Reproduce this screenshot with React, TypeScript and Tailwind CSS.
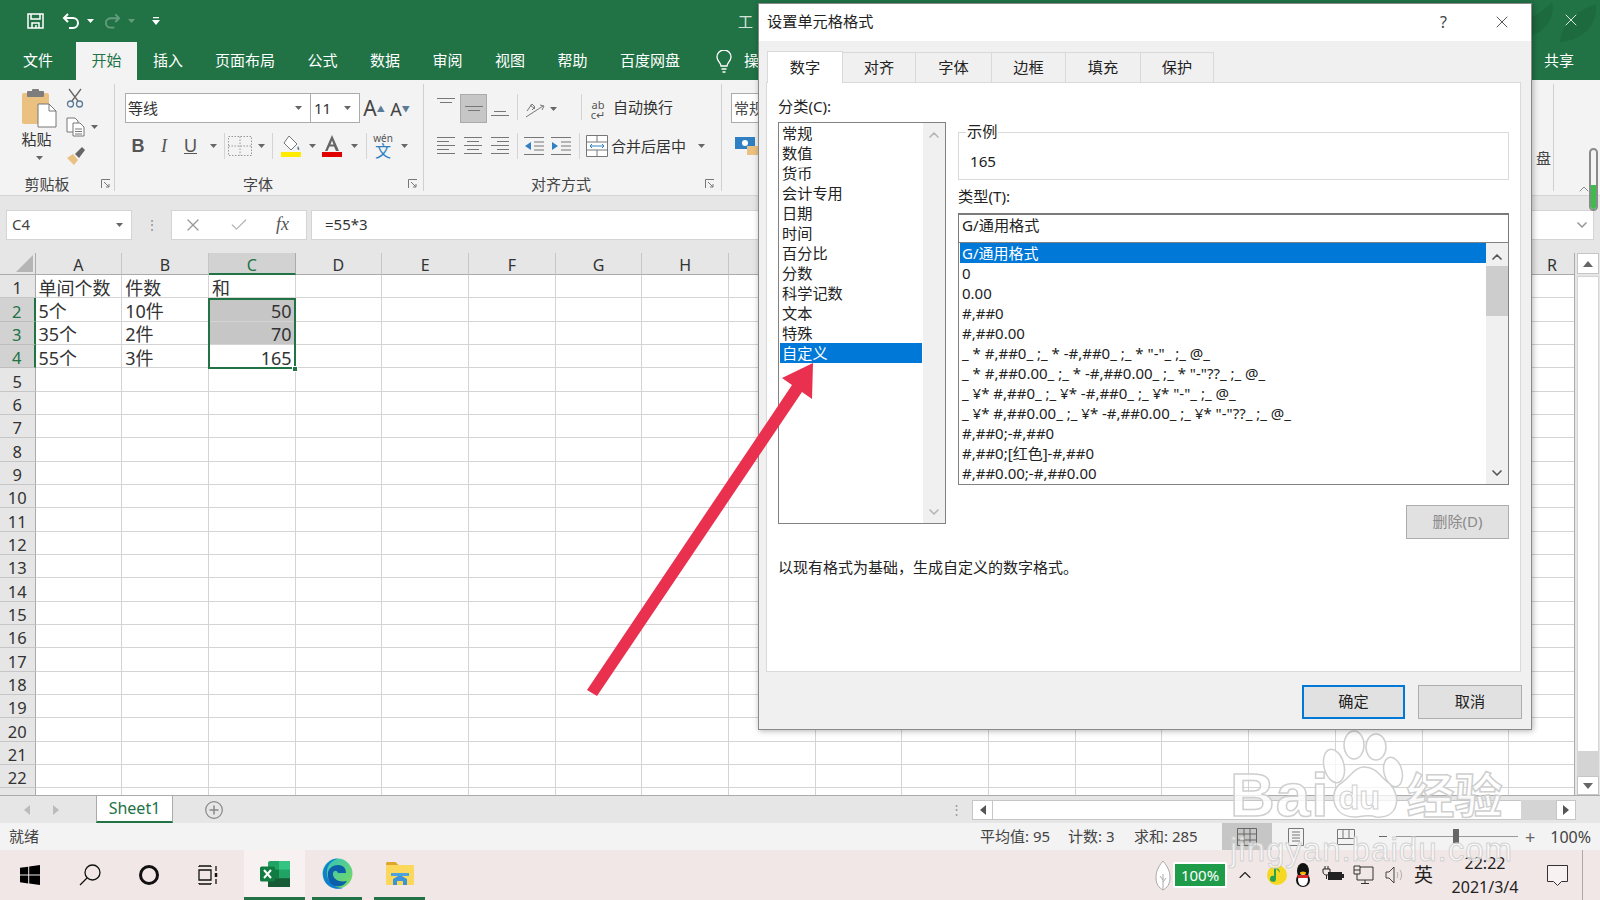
import React from 'react';
import { ChevronUp, ChevronDown, X, Check } from 'lucide-react';

const columns = ['A', 'B', 'C', 'D', 'E', 'F', 'G', 'H', 'I', 'J', 'K', 'L', 'M', 'N', 'O', 'P', 'Q', 'R'];
const rows = Array.from({ length: 23 }, (_, i) => i + 1);
const cells: Record<string, string> = {
  A1: '单间个数', B1: '件数', C1: '和',
  A2: '5个', B2: '10件', C2: '50',
  A3: '35个', B3: '2件', C3: '70',
  A4: '55个', B4: '3件', C4: '165',
};

const tabs = [
  { label: '文件', w: 'w-[76px]' },
  { label: '开始', w: 'w-[61px]', active: true },
  { label: '插入', w: 'w-[62px]' },
  { label: '页面布局', w: 'w-[92px]' },
  { label: '公式', w: 'w-[63px]' },
  { label: '数据', w: 'w-[62px]' },
  { label: '审阅', w: 'w-[63px]' },
  { label: '视图', w: 'w-[62px]' },
  { label: '帮助', w: 'w-[63px]' },
  { label: '百度网盘', w: 'w-[92px]' },
];

const categories = ['常规', '数值', '货币', '会计专用', '日期', '时间', '百分比', '分数', '科学记数', '文本', '特殊', '自定义'];
const formats = [
  'G/通用格式',
  '0',
  '0.00',
  '#,##0',
  '#,##0.00',
  '_ * #,##0_ ;_ * -#,##0_ ;_ * "-"_ ;_ @_',
  '_ * #,##0.00_ ;_ * -#,##0.00_ ;_ * "-"??_ ;_ @_',
  '_ ¥* #,##0_ ;_ ¥* -#,##0_ ;_ ¥* "-"_ ;_ @_',
  '_ ¥* #,##0.00_ ;_ ¥* -#,##0.00_ ;_ ¥* "-"??_ ;_ @_',
  '#,##0;-#,##0',
  '#,##0;[红色]-#,##0',
  '#,##0.00;-#,##0.00',
];
const dialogTabs = [
  { label: '对齐', w: 'w-[73px]' },
  { label: '字体', w: 'w-[76px]' },
  { label: '边框', w: 'w-[74px]' },
  { label: '填充', w: 'w-[75px]' },
  { label: '保护', w: 'w-[73px]' },
];

function Caret({ className = '', color = '#666' }: { className?: string; color?: string }) {
  return (
    <span className={'flex items-center justify-center ' + className}>
      <svg width="7" height="4" viewBox="0 0 7 4"><path d="M0 0h7L3.500 4z" fill={color} /></svg>
    </span>
  );
}

function Lines({ widths, align = 'left' }: { widths: number[]; align?: string }) {
  return (
    <svg width="18" height={widths.length * 4} viewBox={'0 0 18 ' + widths.length * 4}>
      {widths.map((w, i) => {
        const x = align === 'left' ? 0 : align === 'right' ? 18 - w : (18 - w) / 2;
        return <rect key={i} x={x} y={i * 4 + 1} width={w} height="1" fill="#777" />;
      })}
    </svg>
  );
}

function Launcher() {
  return (
    <svg width="10" height="10" viewBox="0 0 10 10" fill="none" stroke="#777">
      <path d="M.5 9V.5H9M3 3l5 5M8 5v3H5" />
    </svg>
  );
}

function VSep({ className = '' }: { className?: string }) {
  return <span className={'w-px h-[26px] bg-[#d4d4d4] ' + className} />;
}

function Group({ width, label, labelW, children }: { width: string; label?: string; labelW?: string; children: React.ReactNode }) {
  return (
    <div className={'flex flex-col h-[107px] mt-[4px] border-r border-[#d0d0d0] shrink-0 ' + width}>
      <div className="h-[89px] shrink-0">{children}</div>
      {label && (
        <div className="flex items-center h-[22px] shrink-0 text-[15px] text-[#444]">
          <span className={'text-center leading-[22px] ' + labelW}>{label}</span>
          <span className="ml-[7px] flex"><Launcher /></span>
        </div>
      )}
    </div>
  );
}

function PasteIcon() {
  return (
    <svg width="36" height="39" viewBox="0 0 36 39">
      <rect x="1" y="4" width="27" height="31" rx="2" fill="#eac180" />
      <rect x="6" y="2" width="17" height="6" rx="1" fill="#7d7d7d" />
      <rect x="11" y="0" width="7" height="4" rx="1" fill="#7d7d7d" />
      <path d="M17 15h11l7 7v16H17z" fill="#fff" stroke="#777" />
      <path d="M28 15v7h7" fill="none" stroke="#777" />
    </svg>
  );
}

function ExcelIcon() {
  return (
    <svg width="30" height="28" viewBox="0 0 30 28">
      <rect x="8" y="1" width="22" height="26" rx="2" fill="#21a366" />
      <rect x="19" y="1" width="11" height="8.6" fill="#33c481" />
      <rect x="8" y="9.6" width="11" height="8.6" fill="#107c41" />
      <rect x="8" y="18.2" width="22" height="8.8" fill="#185c37" />
      <rect x="0" y="6.5" width="15" height="15" rx="1.5" fill="#107c41" />
      <path d="M4 10l7 8M11 10l-7 8" stroke="#fff" strokeWidth="2" />
    </svg>
  );
}

function EdgeIcon() {
  return (
    <svg width="31" height="31" viewBox="0 0 31 31">
      <defs>
        <linearGradient id="edgeA" x1="0" y1="0" x2="1" y2="1">
          <stop offset="0" stopColor="#2fc2c0" />
          <stop offset="1" stopColor="#7ddb5c" />
        </linearGradient>
      </defs>
      <circle cx="15.5" cy="15.5" r="15" fill="url(#edgeA)" />
      <path d="M1 14C3 5 10 .5 16 .5 8 3 4 9 5 17c1 8 9 14 17 12.5C16 33 0 30 1 14z" fill="#0f7fd0" />
      <path d="M6 18c-1-7 4-11 10-11 6 0 8 4 8 8h-8c-1-3-4-3-5 0-1 5 5 10 14 8-3 5-8 6-12 5-4-1-7-5-7-10z" fill="#0c5fa8" />
    </svg>
  );
}

function FolderIcon() {
  return (
    <svg width="28" height="23" viewBox="0 0 28 23">
      <path d="M0 1.500C0 .7.700 0 1.500 0h8l3 3H0z" fill="#e0a52b" />
      <rect y="3" width="28" height="20" rx="1" fill="#fbd75b" />
      <path d="M7 23v-6l7-4 7 4v6h-4v-4h-6v4z" fill="#3b94d9" />
      <rect x="5" y="11" width="18" height="3" fill="#4aa3df" />
    </svg>
  );
}

function Watermark() {
  return (
    <div className="absolute left-[1230px] top-[730px] w-[290px] h-[135px] pointer-events-none">
      <div className="flex items-end h-[96px]">
        <span className="text-[62px] leading-[62px] font-bold tracking-[1px] font-['Liberation_Sans',sans-serif] text-white/80 [-webkit-text-stroke:1.5px_#cfcfcf]">Bai</span>
        <span className="relative w-[84px] h-[88px] -ml-[7px] mb-[8px]">
          <svg className="absolute inset-0" width="84" height="88" viewBox="0 0 84 88" fill="#ffffffc0" stroke="#cfcfcf" strokeWidth="1.5">
            <ellipse cx="12" cy="36" rx="10" ry="17" transform="rotate(-14 12 36)" />
            <ellipse cx="32" cy="15" rx="10" ry="14" />
            <ellipse cx="54" cy="17" rx="10" ry="13" />
            <ellipse cx="71" cy="42" rx="9" ry="15" transform="rotate(-14 71 42)" />
            <path d="M42 37c-10 0-14 11-24 17C8 60 8 86 32 87c6 0 14-3 22 0 22 2 26-20 14-33-10-7-13-17-26-17z" />
          </svg>
          <span className="absolute left-[16px] top-[50px] text-[34px] leading-[34px] font-bold font-['Liberation_Sans',sans-serif] text-white/70 [-webkit-text-stroke:1px_#cfcfcf]">du</span>
        </span>
        <span className="text-[48px] leading-[56px] mb-[6px] font-bold font-['Noto_Sans_CJK_SC',sans-serif] text-white/80 [-webkit-text-stroke:1.5px_#cfcfcf] whitespace-nowrap">经验</span>
      </div>
      <div className="mt-[6px] text-[33px] leading-[36px] tracking-[1px] font-['Liberation_Sans',sans-serif] text-white/70 [-webkit-text-stroke:1px_#d2d2d2] whitespace-nowrap">jingyan.baidu.com</div>
    </div>
  );
}

function ListChevrons({ up, down }: { up: string; down: string }) {
  return (
    <>
      <ChevronUp className={'absolute ' + up} size={16} strokeWidth={2.5} />
      <ChevronDown className={'absolute ' + down} size={16} strokeWidth={2.5} />
    </>
  );
}

function FormatDialog() {
  return (
    <div className="absolute left-[758px] top-[3px] w-[774px] h-[727px] flex flex-col bg-[#f0f0f0] border border-[#8a8a8a] shadow-[1px_1px_6px_rgba(0,0,0,0.3)] text-[#222]">
      <div className="flex items-center h-[37px] pb-[2px] bg-white shrink-0">
        <span className="ml-[8px] text-[15.2px]">设置单元格格式</span>
        <span className="ml-auto mr-[45px] text-[16px] text-[#444]">?</span>
        <X className="mr-[19px]" size={20} strokeWidth={1} color="#333" />
      </div>

      <div className="flex items-end h-[41px] pl-[8px] shrink-0">
        <div className="flex items-center justify-center w-[76px] h-[32px] bg-white border-x border-t border-[#d9d9d9] text-[15.2px] -mb-px z-10">数字</div>
        {dialogTabs.map((t) => (
          <div key={t.label} className={'flex items-center justify-center h-[30px] bg-[#f0f0f0] border-r border-t border-[#d9d9d9] text-[15.2px] ' + t.w}>{t.label}</div>
        ))}
      </div>

      <div className="mx-[7px] w-[755px] h-[590px] bg-white border border-[#d9d9d9] pl-[11px] shrink-0">
        <div className="flex h-[456px]">
          <div className="w-[168px] shrink-0">
            <div className="h-[20px] mt-[13px] text-[15.2px] leading-[20px]">分类(C):</div>
            <div className="relative mt-[6px] h-[402px] border border-[#828282] pl-px text-[15.2px] leading-[20px]">
              {categories.map((c, i) => (
                <div key={c} className={i === 11 ? 'w-[142px] h-[20px] pl-[2px] bg-[#0078d7] text-white' : 'w-[142px] h-[20px] pl-[2px]'}>{c}</div>
              ))}
              <div className="absolute right-0 top-0 bottom-0 w-[22px] bg-[#f0f0f0] text-[#b5b5b5]">
                <ListChevrons up="left-[3px] top-[4px]" down="left-[3px] bottom-[3px]" />
              </div>
            </div>
          </div>

          <div className="ml-[12px] w-[551px] shrink-0">
            <div className="relative mt-[49px] h-[48px] border border-[#d9d9d9]">
              <span className="absolute left-[7px] -top-[12px] bg-white px-px text-[15.2px] leading-[20px]">示例</span>
              <div className="pt-[18px] pl-[11px] text-[15.2px] leading-[20px]">165</div>
            </div>
            <div className="mt-[6px] h-[20px] text-[15.2px] leading-[20px]">类型(T):</div>
            <div className="mt-[7px] h-[30px] border border-[#7a7a7a] border-t-2 pl-[3px] text-[15.2px] leading-[20px] bg-white">G/通用格式</div>
            <div className="relative h-[243px] -mt-px border border-[#828282] pl-px text-[15px] leading-[20px] overflow-hidden">
              {formats.map((f, i) => (
                <div key={f} className={i === 0 ? 'w-[527px] h-[20px] pl-[2px] bg-[#0078d7] text-white whitespace-pre' : 'w-[527px] h-[20px] pl-[2px] whitespace-pre'}>{f}</div>
              ))}
              <div className="absolute right-0 top-0 bottom-0 w-[22px] bg-[#f0f0f0] text-[#555]">
                <ListChevrons up="left-[3px] top-[6px]" down="left-[3px] bottom-[3px]" />
                <div className="mt-[23px] h-[50px] bg-[#cdcdcd]" />
              </div>
            </div>
            <div className="flex justify-end mt-[20px]">
              <div className="flex items-center justify-center w-[103px] h-[34px] pb-[2px] bg-[#e1e1e1] border border-[#adadad] text-[15px] text-[#8a8a8a]">删除(D)</div>
            </div>
          </div>
        </div>
        <div className="mt-[18px] text-[15px] leading-[20px]">以现有格式为基础，生成自定义的数字格式。</div>
      </div>

      <div className="flex justify-end gap-[13px] mt-[13px] pr-[9px]">
        <div className="flex items-center justify-center w-[103px] h-[34px] pb-[2px] bg-[#e1e1e1] border-2 border-[#0078d7] text-[15.2px]">确定</div>
        <div className="flex items-center justify-center w-[104px] h-[34px] pb-[2px] bg-[#e1e1e1] border border-[#adadad] text-[15.2px]">取消</div>
      </div>
    </div>
  );
}

export default function App() {
  return (
    <div className="relative w-[1600px] h-[900px] overflow-hidden flex flex-col bg-white text-[#444] font-['Noto_Sans','Noto_Sans_CJK_SC',sans-serif]">
      {/* title bar */}
      <div className="relative flex items-center h-[42px] bg-[#217346] text-white shrink-0 overflow-hidden">
        <svg className="ml-[27px]" width="17" height="16" viewBox="0 0 17 16" fill="none" stroke="#fff" strokeWidth="1.5">
          <path d="M1 1h15v14H1zM4 1v5h9V1M5 15v-5h7v5" />
          <path d="M9 12v3" />
        </svg>
        <svg className="ml-[18px]" width="18" height="17" viewBox="0 0 18 17" fill="none" stroke="#fff" strokeWidth="2">
          <path d="M6 1L2 5l4 4M2 5h9a5 5 0 0 1 0 10H7" />
        </svg>
        <Caret className="ml-[7px]" color="#fff" />
        <svg className="ml-[10px] opacity-30" width="17" height="17" viewBox="0 0 18 17" fill="none" stroke="#fff" strokeWidth="2">
          <path d="M12 1l4 4-4 4M16 5H7a5 5 0 0 0 0 10h4" />
        </svg>
        <Caret className="ml-[7px] opacity-30" color="#fff" />
        <svg className="ml-[17px]" width="8" height="8" viewBox="0 0 8 8"><path d="M1 0h6v1.300H1zM0 3h8L4 8z" fill="#fff" /></svg>
        <span className="ml-[578px] text-[15px] opacity-80">工</span>
        <svg className="absolute right-0 top-0" width="110" height="42" viewBox="0 0 110 42" fill="#1c6a3e">
          <path d="M20 40C30 20 50 16 62 2c4 18-8 36-42 38z" />
          <path d="M70 42c2-18 14-30 36-38 2 20-12 36-36 38z" />
        </svg>
        <X className="absolute right-[19px] top-[10px]" size={20} strokeWidth={1} />
      </div>

      {/* ribbon tabs */}
      <div className="flex h-[38px] bg-[#217346] text-white text-[15px] shrink-0">
        {tabs.map((t) => (
          <div key={t.label} className={'flex items-center justify-center shrink-0 pb-[2px] ' + t.w + (t.active ? ' bg-[#f3f3f3] text-[#217346]' : '')}>{t.label}</div>
        ))}
        <svg className="ml-[20px] mt-[8px]" width="16" height="23" viewBox="0 0 16 23" fill="none" stroke="#fff" strokeWidth="1.3">
          <path d="M5 16c0-3-4-5-4-9a7 7 0 0 1 14 0c0 4-4 6-4 9zM5.500 19h5M6.500 22h3" />
        </svg>
        <span className="ml-[12px] self-center pb-[2px] whitespace-nowrap">操</span>
        <span className="ml-auto mr-[26px] self-center pb-[2px]">共享</span>
      </div>

      {/* ribbon */}
      <div className="flex h-[116px] bg-[#f3f3f3] border-b border-[#d4d4d4] shrink-0 relative">
        <Group width="w-[115px]" label="剪贴板" labelW="w-[94px]">
          <div className="flex">
            <div className="ml-[21px] w-[36px] flex flex-col items-center pt-[5px]">
              <PasteIcon />
              <span className="text-[15px] leading-[20px] mt-[1px] -ml-[5px] text-[#333]">粘贴</span>
              <Caret className="mt-[7px]" />
            </div>
            <div className="ml-[9px] flex flex-col items-start">
              <svg className="mt-[4px]" width="18" height="20" viewBox="0 0 18 20" fill="none" stroke="#5b7a96" strokeWidth="1.3">
                <path d="M3 1l9 12M15 1L6 13" stroke="#666" />
                <circle cx="4.5" cy="16" r="3" />
                <circle cx="13.5" cy="16" r="3" />
              </svg>
              <div className="flex items-center mt-[9px]">
                <svg width="19" height="20" viewBox="0 0 19 20" fill="#fff" stroke="#777">
                  <path d="M1 1h8l3 3v11H1z" />
                  <path d="M7 6h7l4 4v9H7z" />
                  <path d="M9 12h7M9 14.500h7M9 17h7" />
                </svg>
                <Caret className="ml-[6px]" />
              </div>
              <svg className="mt-[10px]" width="20" height="18" viewBox="0 0 20 18">
                <path d="M1 11l6-4 5 6-4 5z" fill="#eac180" />
                <path d="M9 7l7-7 3 3-6 8z" fill="#666" />
              </svg>
            </div>
          </div>
        </Group>

        <Group width="w-[309px]" label="字体" labelW="w-[286px]">
          <div className="pl-[10px]">
            <div className="flex mt-[9px] h-[30px] text-[15px]">
              <div className="flex items-center justify-between w-[186px] bg-white border border-[#ababab] pl-[2px] pr-[8px]">
                <span className="text-[#333]">等线</span>
                <Caret />
              </div>
              <div className="flex items-center justify-between w-[49px] bg-white border border-l-0 border-[#ababab] pl-[3px] pr-[8px]">
                <span className="text-[#333]">11</span>
                <Caret />
              </div>
              <span className="ml-[1px] w-[26px] text-[21px] leading-[30px] text-center">A<sup className="text-[#5b7a96] text-[8px]">▲</sup></span>
              <span className="w-[26px] text-[18px] leading-[32px] text-center">A<sup className="text-[#5b7a96] text-[8px]">▼</sup></span>
            </div>
            <div className="flex items-center mt-[11px] h-[24px]">
              <span className="w-[26px] text-center text-[18px] font-bold text-[#555] font-['Liberation_Sans',sans-serif]">B</span>
              <span className="w-[26px] text-center text-[18px] italic text-[#555] font-['Liberation_Serif',serif]">I</span>
              <span className="w-[27px] text-center text-[18px] underline text-[#555] font-['Liberation_Sans',sans-serif]">U</span>
              <Caret className="w-[18px]" />
              <VSep className="ml-[2px]" />
              <svg className="ml-[3px]" width="24" height="20" viewBox="0 0 24 20" fill="none" stroke="#999" strokeDasharray="1.5 1.5">
                <path d="M.5.500h23v19H.5zM12 .5v19M.5 10h23" />
              </svg>
              <Caret className="w-[12px] ml-[3px]" />
              <VSep className="ml-[5px]" />
              <svg className="ml-[6px]" width="24" height="24" viewBox="0 0 24 24">
                <path d="M10 2l8 8-6 6-7-7z" fill="#fff" stroke="#777" />
                <path d="M19 12c1 2 2 3 1 4-2 0-2-2-1-4z" fill="#5b7a96" />
                <rect x="2" y="18" width="20" height="5" fill="#ffeb00" />
              </svg>
              <Caret className="w-[12px] ml-[3px]" />
              <svg className="ml-[2px]" width="24" height="24" viewBox="0 0 24 24">
                <path d="M5 17L12 1l7 16h-3l-2-4.500h-4.500L7.500 17zM10.500 10.500h3l-1.500-4z" fill="#666" />
                <rect x="2" y="18" width="20" height="5" fill="#e00000" />
              </svg>
              <Caret className="w-[12px] ml-[4px]" />
              <VSep className="ml-[6px]" />
              <span className="ml-[5px] w-[22px] flex flex-col items-center text-center">
                <span className="text-[10px] leading-[10px] text-[#555]">wén</span>
                <span className="text-[16px] leading-[16px] text-[#2f7fc2]">文</span>
              </span>
              <Caret className="w-[12px] ml-[4px]" />
            </div>
          </div>
        </Group>

        <Group width="w-[298px]" label="对齐方式" labelW="w-[274px]">
          <div className="pl-[10px]">
            <div className="flex items-start mt-[10px] h-[29px]">
              <span className="w-[24px] flex justify-center pt-[3px]"><Lines widths={[18, 12]} align="center" /></span>
              <span className="ml-[2px] w-[27px] h-[29px] flex justify-center items-center bg-[#c6c6c6] border border-[#ababab]"><Lines widths={[18, 12]} align="center" /></span>
              <span className="ml-[1px] w-[24px] flex justify-center pt-[16px]"><Lines widths={[12, 18]} align="center" /></span>
              <VSep className="ml-[5px]" />
              <svg className="ml-[5px] mt-[5px]" width="24" height="22" viewBox="0 0 24 22" fill="none" stroke="#777">
                <path d="M3 18L20 7M17 6l4 1-2 4" />
                <path d="M4 12l5-7 3 3-3 3M7 6l5 4" />
              </svg>
              <Caret className="w-[12px] h-[29px]" />
              <VSep className="ml-[22px]" />
              <span className="ml-[6px] w-[20px] text-[11px] leading-[10px] pt-[6px] text-center text-[#555]">ab<br />c↵</span>
              <span className="ml-[5px] text-[15px] leading-[27px] whitespace-nowrap text-[#333]">自动换行</span>
            </div>
            <div className="flex items-center mt-[11px] h-[24px]">
              <span className="w-[24px] flex justify-center"><Lines widths={[18, 12, 18, 12, 18]} /></span>
              <span className="ml-[3px] w-[24px] flex justify-center"><Lines widths={[18, 12, 18, 12, 18]} align="center" /></span>
              <span className="ml-[3px] w-[24px] flex justify-center"><Lines widths={[18, 12, 18, 12, 18]} align="right" /></span>
              <VSep className="ml-[5px]" />
              <svg className="ml-[4px]" width="24" height="20" viewBox="0 0 24 20" stroke="#777">
                <path d="M2 1.500h20M12 6h10M12 10h10M12 14h10M2 18.500h20" />
                <path d="M9 6v8L3 10z" fill="#2f7fc2" stroke="none" />
              </svg>
              <svg className="ml-[3px]" width="24" height="20" viewBox="0 0 24 20" stroke="#777">
                <path d="M2 1.500h20M12 6h10M12 10h10M12 14h10M2 18.500h20" />
                <path d="M3 6v8l6-4z" fill="#2f7fc2" stroke="none" />
              </svg>
              <VSep className="ml-[6px]" />
              <svg className="ml-[6px]" width="22" height="22" viewBox="0 0 22 22" fill="#fff" stroke="#777">
                <path d="M.5.500h21v21H.5zM.5 7h21M.5 15h21M11 .5V7M11 15v6.500" />
                <path d="M4 11h14M6 9l-2 2 2 2M16 9l2 2-2 2" fill="none" stroke="#2f7fc2" />
              </svg>
              <span className="ml-[3px] text-[15px] whitespace-nowrap text-[#333]">合并后居中</span>
              <Caret className="w-[12px] ml-[9px]" />
            </div>
          </div>
        </Group>

        <div className="mt-[13px] ml-[9px] w-[27px] shrink-0">
          <div className="w-[27px] h-[30px] bg-white border border-[#ababab] border-r-0 pl-[2px] text-[15px] leading-[28px] whitespace-nowrap overflow-hidden">常规</div>
          <svg className="mt-[14px] ml-[4px]" width="24" height="20" viewBox="0 0 24 20">
            <rect width="20" height="12" fill="#2f7fc2" />
            <circle cx="10" cy="6" r="3" fill="#fff" />
            <rect x="12" y="9" width="11" height="9" fill="#eac180" />
          </svg>
        </div>

        <div className="ml-auto flex w-[64px] shrink-0">
          <span className="mt-[68px] text-[15px] leading-[20px]">盘</span>
          <span className="ml-[2px] mt-[4px] w-px h-[107px] bg-[#d0d0d0]" />
          <ChevronUp className="ml-[22px] mt-[101px]" size={16} strokeWidth={1} color="#555" />
        </div>
      </div>

      {/* formula bar */}
      <div className="flex items-center h-[57px] bg-[#e6e6e6] text-[15px] shrink-0">
        <div className="flex items-center justify-between ml-[6px] w-[126px] h-[30px] bg-white border border-[#d4d4d4] pl-[5px] pr-[8px]">
          <span>C4</span>
          <Caret />
        </div>
        <span className="ml-[14px] w-[10px] text-center text-[#888] leading-[14px] text-[12px]">⋮</span>
        <div className="flex items-center ml-[15px] w-[136px] h-[30px] bg-white border border-[#d4d4d4] text-[#999]">
          <X className="ml-[11px]" size={20} strokeWidth={1.5} />
          <Check className="ml-[26px]" size={20} strokeWidth={1.5} color="#b5b5b5" />
          <span className="ml-[27px] text-[18px] italic text-[#555] font-['Liberation_Serif',serif]">fx</span>
        </div>
        <div className="flex items-center ml-[4px] w-[1283px] h-[30px] bg-white border border-[#d4d4d4] pl-[13px] pr-[3px] justify-between">
          <span className="text-[#333]">=55*3</span>
          <ChevronDown size={16} color="#999" strokeWidth={2.5} />
        </div>
      </div>

      {/* sheet */}
      <div className="flex h-[542px] bg-[#e6e6e6] shrink-0">
        <div className="relative w-[1575px] h-[542px] overflow-hidden bg-white border-r border-[#ababab]">
          <div className="flex h-[22px]">
            <div className="flex items-end justify-end w-[35.5px] shrink-0 bg-[#e6e6e6] border-r border-b border-[#ababab] pr-[2px] pb-[2px]">
              <svg width="17" height="17" viewBox="0 0 17 17"><path d="M17 0v17H0z" fill="#b5b5b5" /></svg>
            </div>
            {columns.map((c) => (
              <div key={c} className={c === 'C'
                ? 'w-[86.7px] shrink-0 flex items-center justify-center pt-[3px] bg-[#d2d2d2] border-r border-[#ababab] border-b-2 border-b-[#217346] text-[16px] text-[#217346]'
                : 'w-[86.7px] shrink-0 flex items-center justify-center pt-[3px] bg-[#e6e6e6] border-r border-b border-[#c6c6c6] border-b-[#ababab] text-[16px] text-[#333]'}>
                {c}
              </div>
            ))}
          </div>
          {rows.map((r) => {
            const active = r >= 2 && r <= 4;
            return (
              <div key={r} className="flex h-[23.33px]">
                <div className={active
                  ? 'w-[35.5px] shrink-0 flex items-center justify-center pt-[5px] bg-[#d2d2d2] border-r-2 border-r-[#217346] border-b border-b-[#bdbdbd] text-[16.5px] text-[#217346]'
                  : 'w-[35.5px] shrink-0 flex items-center justify-center pt-[5px] bg-[#e6e6e6] border-r border-b border-[#ababab] border-b-[#c6c6c6] text-[16.5px] text-[#333]'}>
                  {r < 23 ? r : ''}
                </div>
                {columns.map((c) => {
                  const value = cells[c + r];
                  const isNum = c === 'C' && active;
                  const shaded = c === 'C' && (r === 2 || r === 3);
                  return (
                    <div key={c} className={'w-[86.7px] shrink-0 flex items-center pt-[4px] overflow-visible whitespace-nowrap border-r border-b border-[#d4d4d4] text-[18px] text-[#333] px-[3px] '
                      + (isNum ? 'justify-end ' : '') + (shaded ? 'bg-[#c6c6c6]' : '')}>
                      {value}
                    </div>
                  );
                })}
              </div>
            );
          })}
          <div className="absolute left-[208px] top-[44.5px] w-[88px] h-[71.5px] border-2 border-[#217346]" />
          <div className="absolute left-[292px] top-[113px] w-[6px] h-[6px] bg-[#217346] border border-white" />
        </div>
        <div className="ml-[2px] w-[22px] flex flex-col">
          <div className="flex items-center justify-center h-[21px] bg-white border border-[#c6c6c6]">
            <svg width="10" height="6" viewBox="0 0 10 6"><path d="M0 6l5-6 5 6z" fill="#666" /></svg>
          </div>
          <div className="mt-[2px] h-[476px] bg-white border border-[#d4d4d4]" />
          <div className="flex-1 bg-[#d4d4d4]" />
          <div className="flex items-center justify-center h-[19px] bg-white border border-[#c6c6c6]">
            <svg width="10" height="6" viewBox="0 0 10 6"><path d="M0 0l5 6 5-6z" fill="#666" /></svg>
          </div>
        </div>
      </div>

      {/* sheet tabs */}
      <div className="flex items-center h-[28px] bg-[#e6e6e6] border-t border-[#ababab] shrink-0">
        <svg className="ml-[24px]" width="6" height="10" viewBox="0 0 6 10"><path d="M6 0v10L0 5z" fill="#bbb" /></svg>
        <svg className="ml-[23px]" width="6" height="10" viewBox="0 0 6 10"><path d="M0 0v10l6-5z" fill="#bbb" /></svg>
        <div className="ml-[37px] flex items-center justify-center w-[77px] h-[27px] -mt-px bg-white border-x border-[#ababab] border-b-2 border-b-[#217346] text-[16px] text-[#217346]">Sheet1</div>
        <svg className="ml-[32px]" width="18" height="18" viewBox="0 0 18 18" fill="none" stroke="#888" strokeWidth="1.2">
          <circle cx="9" cy="9" r="8.3" />
          <path d="M9 4.500v9M4.500 9h9" strokeWidth="1.5" />
        </svg>
        <span className="ml-[727px] text-[#999] text-[13px]">⋮</span>
        <div className="ml-[9px] flex items-center h-[20px] w-[604px] bg-[#d4d4d4]">
          <div className="flex items-center justify-center w-[21px] h-[20px] bg-white border border-[#c6c6c6]">
            <svg width="6" height="10" viewBox="0 0 6 10"><path d="M6 0v10L0 5z" fill="#555" /></svg>
          </div>
          <div className="w-[528px] h-[20px] bg-white border-y border-[#c6c6c6]" />
          <div className="ml-auto flex items-center justify-center w-[20px] h-[20px] bg-white border border-[#c6c6c6]">
            <svg width="6" height="10" viewBox="0 0 6 10"><path d="M0 0v10l6-5z" fill="#555" /></svg>
          </div>
        </div>
      </div>

      {/* status bar */}
      <div className="flex items-center h-[27px] bg-[#f3f3f3] text-[15px] text-[#444] shrink-0">
        <span className="ml-[9px] w-[971px]">就绪</span>
        <span className="w-[88px] whitespace-nowrap">平均值: 95</span>
        <span className="w-[66px] whitespace-nowrap">计数: 3</span>
        <span className="w-[88px] whitespace-nowrap">求和: 285</span>
        <div className="flex items-center justify-center w-[50px] h-[27px] bg-[#c6c6c6]">
          <svg width="20" height="18" viewBox="0 0 20 18" fill="none" stroke="#666"><path d="M.5.500h19v17H.5zM7 .5v17M13 .5v17M.5 6h19M.5 12h19" /></svg>
        </div>
        <svg className="ml-[16px]" width="16" height="18" viewBox="0 0 16 18" fill="none" stroke="#777"><path d="M.5.500h15v17H.5zM4 4h8M4 7h8M4 10h8M4 13h8" /></svg>
        <svg className="ml-[33px]" width="18" height="16" viewBox="0 0 18 16" fill="none" stroke="#777"><path d="M.5.500h17v15H.5zM6 .5v9M12 .5v9M.5 9.500h17" /></svg>
        <span className="ml-[24px] w-[8px] h-px bg-[#666]" />
        <div className="relative ml-[9px] w-[122px] h-px bg-[#999]">
          <span className="absolute left-[57px] -top-[7px] w-[6px] h-[15px] bg-[#666]" />
        </div>
        <span className="ml-[7px] text-[18px] leading-none text-[#666]">+</span>
        <span className="ml-[15px] text-[16px] whitespace-nowrap">100%</span>
      </div>

      {/* taskbar */}
      <div className="flex h-[50px] bg-[#f2e7e7] text-[#222] shrink-0">
        <svg className="ml-[20px] mt-[15px]" width="20" height="20" viewBox="0 0 20 20" fill="#000">
          <path d="M0 2.800L8.200 1.700v7.900H0zM9.200 1.500L20 0v9.600H9.200zM0 10.500h8.200v7.900L0 17.300zM9.200 10.500H20V20L9.200 18.500z" />
        </svg>
        <svg className="ml-[39px] mt-[14px]" width="22" height="22" viewBox="0 0 22 22" fill="none" stroke="#111" strokeWidth="1.3">
          <circle cx="13.5" cy="8.500" r="7.500" />
          <path d="M8 14l-7 7" />
        </svg>
        <span className="ml-[38px] mt-[15px] w-[20px] h-[20px] rounded-full border-[3px] border-[#111]" />
        <svg className="ml-[39px] mt-[15px]" width="21" height="20" viewBox="0 0 21 20" fill="none" stroke="#111" strokeWidth="1.3">
          <path d="M1 5h12v10H1zM1 1v1M13 1v1M1 1h12M1 18v1M13 18v1M1 19h12M18 1v5M18 14v5" />
          <path d="M18 8v4" strokeWidth="2.5" />
        </svg>
        <div className="ml-[25px] w-[61px] h-[50px] flex items-center justify-center bg-[#f7f2f1] border-b-[3px] border-[#217346]">
          <ExcelIcon />
        </div>
        <div className="ml-[7px] w-[50px] h-[50px] flex items-center justify-center border-b-[3px] border-[#217346]">
          <EdgeIcon />
        </div>
        <div className="ml-[12px] w-[51px] h-[50px] flex items-center justify-center border-b-[3px] border-[#217346]">
          <FolderIcon />
        </div>

        <svg className="ml-[730px] mt-[10px]" width="16" height="31" viewBox="0 0 16 31" fill="#fff" stroke="#aaa">
          <path d="M8 1C2 8 1 13 1 18c0 6 3 10 7 12 4-2 7-6 7-12 0-5-1-10-7-17z" />
          <path d="M8 30V14M8 20l-3-4M8 22l3-4" fill="none" />
        </svg>
        <div className="ml-[2px] mt-[12px] flex items-center justify-center w-[54px] h-[26px] rounded-[2px] bg-[#1f9c4a] border-[2px] border-white text-white text-[15px]">100%</div>
        <ChevronUp className="ml-[8px] mt-[15px]" size={20} strokeWidth={1.3} />
        <svg className="ml-[11px] mt-[13px]" width="22" height="24" viewBox="0 0 22 24">
          <circle cx="11" cy="12" r="10" fill="#f5d81f" />
          <path d="M10 6v10a3 3 0 1 1-2-3V5c3 0 6 1 6 5-1-2-2-3-4-4z" fill="#2aa14c" />
        </svg>
        <svg className="ml-[7px] mt-[12px]" width="16" height="26" viewBox="0 0 16 26">
          <ellipse cx="8" cy="9" rx="6" ry="8" fill="#111" />
          <ellipse cx="8" cy="18" rx="7" ry="7" fill="#111" />
          <ellipse cx="8" cy="18" rx="5" ry="6" fill="#fff" />
          <path d="M2 13h12l-1 3H3z" fill="#d62828" />
          <ellipse cx="8" cy="11" rx="3" ry="1.5" fill="#f5b800" />
        </svg>
        <svg className="ml-[11px] mt-[15px]" width="22" height="20" viewBox="0 0 22 20">
          <path d="M3 1v3M6 1v3M1 4h7v3c0 2-2 3-3.500 3S1 9 1 7zM4.500 10v4" fill="none" stroke="#222" />
          <rect x="6" y="7" width="14" height="8" fill="#222" />
          <rect x="20" y="9" width="2" height="4" fill="#222" />
        </svg>
        <svg className="ml-[9px] mt-[15px]" width="21" height="20" viewBox="0 0 21 20" fill="none" stroke="#333">
          <path d="M4 2h16v13H4zM12 15v3M8 18.500h8" />
          <path d="M1 1h6v8H1zM1 5h6" fill="#f2e7e7" />
        </svg>
        <svg className="ml-[11px] mt-[15px]" width="20" height="20" viewBox="0 0 20 20" fill="none" stroke="#444">
          <path d="M1 7h3l5-5v16l-5-5H1z" />
          <path d="M12 7c1 1.500 1 4.500 0 6M15 5c2 3 2 7 0 10" stroke="#aaa" />
        </svg>
        <span className="ml-[9px] mt-[11px] text-[19px] leading-[26px] font-['Noto_Sans_CJK_SC',sans-serif]">英</span>
        <div className="ml-[10px] w-[84px] flex flex-col items-center text-[16px] leading-[24px] pt-[1px]">
          <span>22:22</span>
          <span>2021/3/4</span>
        </div>
        <svg className="ml-[20px] mt-[15px]" width="21" height="22" viewBox="0 0 21 22" fill="#f7f2f1" stroke="#333">
          <path d="M.5.500h20v16h-6l-4 4-4-4h-6z" />
        </svg>
        <span className="ml-[14px] w-px h-[50px] bg-[#aaa]" />
      </div>

      {/* floating widget at the right edge */}
      <div className="absolute left-[1589px] top-[148px] w-[9px] h-[63px] rounded-full bg-[#f3f3f3] border-2 border-[#8a8a8a] overflow-hidden flex flex-col justify-end">
        <div className="h-[24px] bg-[#3dbb4c]" />
      </div>

      <Watermark />
      <FormatDialog />

      <svg className="absolute left-0 top-0 pointer-events-none" width="1600" height="900" viewBox="0 0 1600 900">
        <polygon points="597,696 587,690 792,385 782,378 813,363 812,399 802,392" fill="#e9304f" />
      </svg>
    </div>
  );
}
